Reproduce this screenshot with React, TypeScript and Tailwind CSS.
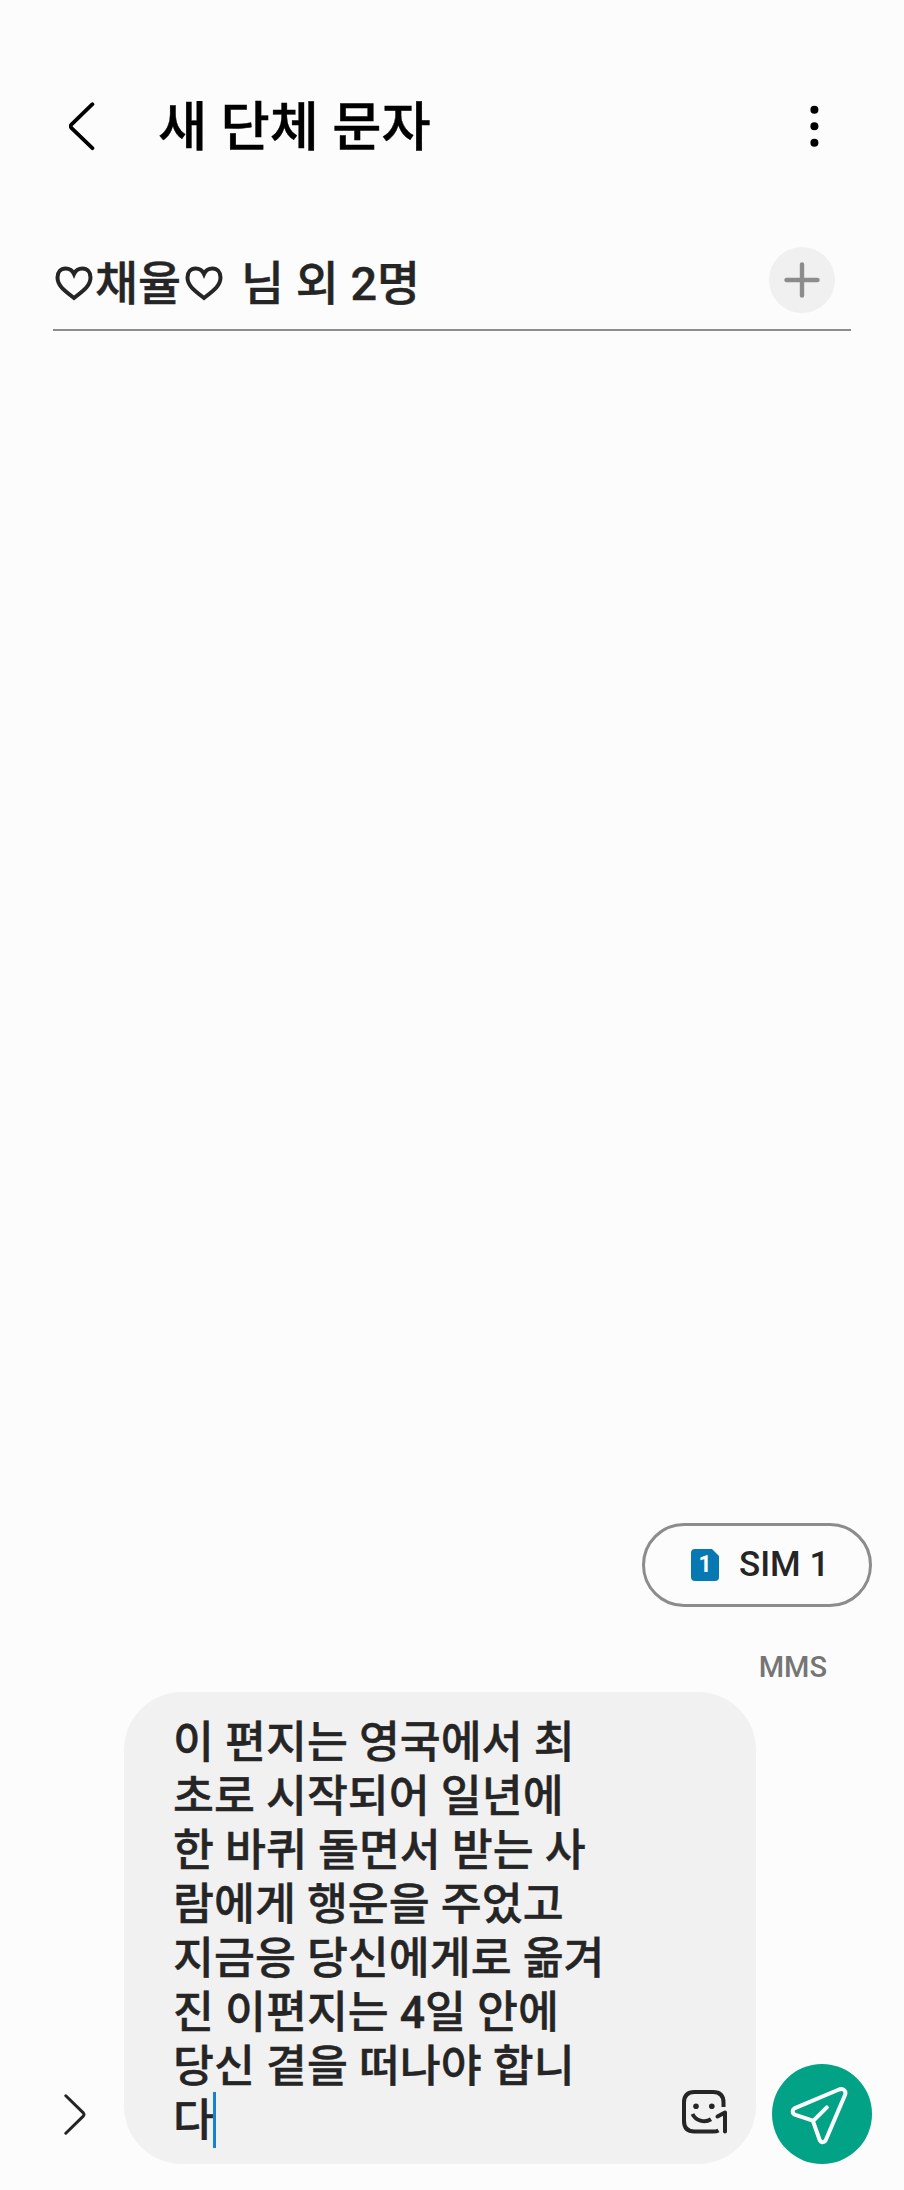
const lines = [
  "이 편지는 영국에서 최",
  "초로 시작되어 일년에",
  "한 바퀴 돌면서 받는 사",
  "람에게 행운을 주었고",
  "지금응 당신에게로 옮겨",
  "진 이편지는 4일 안에",
  "당신 곁을 떠나야 합니",
  "다",
];

function Heart() {
  return (
    <svg width="38" height="35" viewBox="0 0 38 35" fill="none" stroke="#252525" strokeWidth="4" strokeLinejoin="miter" className="block shrink-0">
      <path d="M19 32C10 25 2.500 20 2.500 11.500C2.500 6 6 2.500 10.500 2.500C14.500 2.500 17.500 4.500 19 8C20.500 4.500 23.500 2.500 27.500 2.500C32 2.500 35.500 6 35.500 11.500C35.500 20 28 25 19 32Z" />
    </svg>
  );
}

function Header() {
  return (
    <header className="flex h-[80px] items-center pl-[69px] pr-[76px]">
      <button aria-label="뒤로" className="shrink-0">
        <svg width="26" height="50" viewBox="0 0 26 50" fill="none" stroke="#000" strokeWidth="3.8" strokeLinecap="round" strokeLinejoin="round">
          <path d="M23.400 3.200L2.600 23.300Q0.800 25.200 2.600 27.100L23.400 47.200" />
        </svg>
      </button>
      <h1 className="ml-[63px] flex-1 whitespace-nowrap pt-1 text-[53.5px] font-medium leading-[80px] text-black [-webkit-text-stroke:0.4px]">새 단체 문자</h1>
      <button aria-label="더보기" className="shrink-0">
        <svg width="28" height="42" viewBox="0 0 28 42" fill="#000">
          <circle cx="14.400" cy="4.800" r="4" />
          <circle cx="14.400" cy="21.300" r="4" />
          <circle cx="14.400" cy="37.800" r="4" />
        </svg>
      </button>
    </header>
  );
}

function Recipients() {
  return (
    <div className="mx-[53px] mt-[65px] flex h-[100px] items-center border-b-2 border-[#8c8c8c] pr-4">
      <div className="flex flex-1 items-center whitespace-nowrap pl-[2px] pt-[7px] text-[46.8px] font-medium leading-[60px] [-webkit-text-stroke:0.4px]">
        <Heart />
        <span className="ml-[2px] mr-1">채율</span>
        <Heart />
        <span className="ml-[18px]">님 외 2명</span>
      </div>
      <button aria-label="추가" className="grid size-[66px] place-items-center rounded-full bg-[#f0f0f0]">
        <svg width="36" height="36" viewBox="0 0 36 36" stroke="#8c8c8c" strokeWidth="4.400" strokeLinecap="round">
          <path d="M18 2.500V33.500M2.500 18H33.500" />
        </svg>
      </button>
    </div>
  );
}

function SimButton() {
  return (
    <button className="flex h-[84px] w-[230px] items-center rounded-full border-[3px] border-[#8c8c8c] pl-[46px]">
      <span className="grid h-8 w-7 place-items-center rounded-[4px] bg-[#0779b2] text-[23px] font-bold leading-8 text-white [clip-path:polygon(0_0,21px_0,28px_7px,28px_100%,0_100%)]">
        1
      </span>
      <span className="ml-5 whitespace-nowrap text-[35px] font-medium leading-[78px]">SIM 1</span>
    </button>
  );
}

function Composer() {
  return (
    <div className="flex items-end pl-[64px] pr-8">
      <button aria-label="펼치기" className="mb-[29px] w-[60px] shrink-0">
        <svg width="22" height="41" viewBox="0 0 22 41" fill="none" stroke="#252525" strokeWidth="3" strokeLinecap="round" strokeLinejoin="round">
          <path d="M1.800 1.800L19.300 18.900Q20.600 20.500 19.300 22.100L1.800 39.200" />
        </svg>
      </button>
      <div className="flex h-[472px] w-[632px] shrink-0 items-end justify-between rounded-[58px] bg-[#f1f1f1] pl-[49px] pr-[28px]">
        <div className="self-start pt-6 text-[44.5px] font-medium leading-[54px] [-webkit-text-stroke:0.4px]">
          {lines.map((line, i) => (
            <div key={i} className="flex h-[54px] items-center whitespace-nowrap">
              {line}
              {i === lines.length - 1 && <span className="-mt-[2px] -ml-[1px] h-14 w-[3px] shrink-0 bg-[#1a80d2]" />}
            </div>
          ))}
        </div>
        <button aria-label="스티커" className="mb-[30px]">
          <svg width="46" height="44" viewBox="0 0 46 44" fill="none" stroke="#252525" strokeWidth="4" strokeLinecap="round">
            <path strokeLinecap="butt" d="M41.500 17V12.500Q41.500 2 31 2H12.500Q2 2 2 12.500V31Q2 41.500 12.500 41.500H31Q34.500 41.500 36.500 40.400" />
            <circle cx="14" cy="16.300" r="2.800" fill="#252525" stroke="none" />
            <circle cx="29.800" cy="16.300" r="2.800" fill="#252525" stroke="none" />
            <path strokeLinecap="butt" d="M29 29.200C22.500 33.300 13.500 30.500 10.500 24" />
            <path strokeLinejoin="round" d="M35.500 26.500L43 22.500V41.500" />
          </svg>
        </button>
      </div>
      <button aria-label="보내기" className="ml-4 grid size-[100px] shrink-0 place-items-center rounded-full bg-[#02a287]">
        <svg width="100" height="100" viewBox="0 0 100 100" fill="none" stroke="#fff" strokeWidth="4" strokeLinecap="round" strokeLinejoin="round">
          <path d="M67 25.500L23.500 43.800C19.800 45.500 19.800 49.500 23.500 50.900L40.800 56.700L47.500 75.500C48.800 79 52.500 79 54 75.500L73 31C74.500 27 71.500 23.900 67 25.500Z" />
          <path d="M41.500 56.700L54.800 43.300" />
        </svg>
      </button>
    </div>
  );
}

export default function App() {
  return (
    <div className="flex h-[2190px] w-[904px] flex-col overflow-hidden bg-[#fcfcfc] pb-[26px] pt-[86px] font-[Roboto,'Noto_Sans_CJK_KR',sans-serif] text-[#252525]">
      <Header />
      <Recipients />
      <main className="flex-1" />
      <div className="flex justify-end pr-8">
        <SimButton />
      </div>
      <div className="mt-[37px] flex h-12 items-center justify-end pb-px pr-[77px] text-[29px] font-medium text-[#757575]">MMS</div>
      <Composer />
    </div>
  );
}
